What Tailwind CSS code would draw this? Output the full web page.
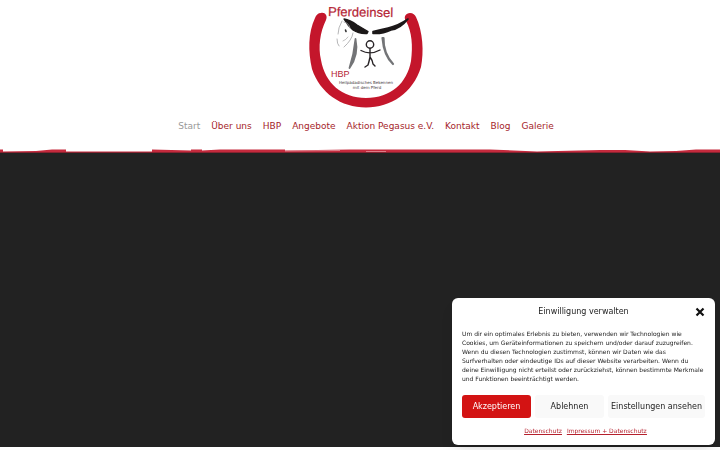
<!DOCTYPE html>
<html lang="de">
<head>
<meta charset="utf-8">
<meta name="viewport" content="width=device-width, initial-scale=1">
<title>Pferdeinsel</title>
<script src="https://cdn.jsdelivr.net/npm/@tailwindcss/browser@4"></script>
</head>
<body class="flex min-h-screen flex-col bg-white font-['DejaVu_Sans',sans-serif]">
<header>
  <div class="flex flex-col items-center pl-3">
    <a href="#" aria-label="Pferdeinsel Startseite" class="block">
      <svg width="132" height="112" viewBox="0 0 132 112" class="block" role="img" aria-label="Pferdeinsel Logo">
        <path d="M21 13C25 12 28 16 26 20C20 32 18 47 21 60C25 83 42 98 66 98C91 98 107 83 111 61C113 46 112 32 106 21C103 17 106 13 110 13C113 13 115 15 116 17C123 32 124 52 121 67C113 93 91 107.500 66 107.500C41 107.500 20 93 12 69C8 51 8 33 15 18C16 15 18 13 21 13Z" fill="#c4162b"/>
        <g fill="none" stroke-linecap="round" stroke-linejoin="round">
          <path d="M44 19Q50 20 57 25Q62 28 68 31.500L67 33.500Q59 34 53 30Q48 26 44 19Z" fill="#1c1819" stroke="#1c1819" stroke-width="1.400"/>
          <path d="M73 31.500Q80 30 88 28Q98 26 108 19Q100 29 91 30Q83 34 73 33.500Z" fill="#1c1819" stroke="#1c1819" stroke-width="1.600"/>
          <path d="M42 21Q38 28 38 34M37 39Q37 44 39 46M44 22Q49 23 50 28M53 33Q52 40 44 47" stroke="#a2a2a4" stroke-width=".8"/>
          <path d="M45.500 30L46 31.500" stroke="#333333" stroke-width="1.600"/>
          <path d="M48 37Q46 40 43 41" stroke="#999999" stroke-width=".6"/>
          <path d="M55.500 39Q59 55 49.500 68Q54 54 55.500 39Z" fill="#737477" stroke="#737477" stroke-width="1.800"/>
          <path d="M83.500 38Q83 53 93 64Q84 56 82.500 38Z" fill="#737477" stroke="#737477" stroke-width="2.200"/>
          <g stroke="#282326" stroke-width="1.400">
            <circle cx="70" cy="44.500" r="3.700"/>
            <path d="M70 48.500V57M61 50.500Q70 55.500 80 50M70 57Q69 62 68 65L65 67M70 57Q73 61 73 64L75 66"/>
          </g>
        </g>
        <g class="font-['Liberation_Sans',sans-serif]" fill="#b51f35">
          <text x="28" y="16" font-size="13" stroke="#b51f35" stroke-width=".2" transform="rotate(1 28 16)">Pferdeinsel</text>
          <text x="31" y="77" font-size="9">HBP</text>
        </g>
        <g class="font-['DejaVu_Sans',sans-serif]" fill="#3d373a" font-size="4" text-anchor="middle">
          <text x="66" y="84">Heilpädadisches Bekennen</text>
          <text x="67" y="89">mit dem Pferd</text>
        </g>
      </svg>
    </a>
    <nav aria-label="Hauptmenü" class="pt-2 pb-4">
      <ul class="flex flex-wrap justify-center gap-x-[11px] text-[9px] leading-[13px] text-[#a51e2a]">
        <li><a href="#" aria-current="page" class="text-[#999999]">Start</a></li>
        <li><a href="#">Über uns</a></li>
        <li><a href="#">HBP</a></li>
        <li><a href="#">Angebote</a></li>
        <li><a href="#">Aktion Pegasus e.V.</a></li>
        <li><a href="#">Kontakt</a></li>
        <li><a href="#">Blog</a></li>
        <li><a href="#">Galerie</a></li>
      </ul>
    </nav>
  </div>
  <svg viewBox="0 0 720 4" preserveAspectRatio="none" class="block h-1 w-full" aria-hidden="true">
    <path d="M0 .5H3V2.500L36 2L52 .5H66V2.500H152V.5L191 1.500V.5H202V1.500L220 .5H285V1.500L350 .5H490L537 2.500L600 1L625 1L650 2.500L676 2L696 .5H720V4H0Z" fill="#c52a3d"/>
    <path d="M285 2L340 1.500M366 2.500H386" stroke="#e6a0a9" stroke-width=".7"/>
    <path d="M0 3.500H720" stroke="#4a1b24" stroke-opacity=".5"/>
  </svg>
</header>
<main class="mb-[3px] flex-1 bg-[#222222]"></main>
<section role="dialog" aria-labelledby="consent-title" class="fixed right-[5px] bottom-[5px] w-[263px] rounded-md bg-white px-[10px] pt-2 pb-[10px] text-[#222222] shadow-lg">
  <div class="grid grid-cols-[10px_1fr_10px] items-center">
    <h2 id="consent-title" class="col-start-2 text-center text-[8px] leading-3">Einwilligung verwalten</h2>
    <button type="button" aria-label="Dialog schließen" class="flex justify-end">
      <svg width="10" height="10" viewBox="0 0 10 10" aria-hidden="true"><path d="M1.500 1.500L8.500 8.500M8.500 1.500L1.500 8.500" stroke="#111111" stroke-width="2.200"/></svg>
    </button>
  </div>
  <p class="mt-[11px] text-[6px] leading-[9px]">Um dir ein optimales Erlebnis zu bieten, verwenden wir Technologien wie Cookies, um Geräteinformationen zu speichern und/oder darauf zuzugreifen. Wenn du diesen Technologien zustimmst, können wir Daten wie das Surfverhalten oder eindeutige IDs auf dieser Website verarbeiten. Wenn du deine Einwilligung nicht erteilst oder zurückziehst, können bestimmte Merkmale und Funktionen beeinträchtigt werden.</p>
  <div class="mt-3 grid grid-cols-[69fr_69fr_97fr] gap-1 text-[8px]">
    <button type="button" class="h-[23px] rounded-[3px] bg-[#d31313] text-white">Akzeptieren</button>
    <button type="button" class="h-[23px] rounded-[3px] bg-[#f9f9f9]">Ablehnen</button>
    <button type="button" class="h-[23px] rounded-[3px] bg-[#f9f9f9] whitespace-nowrap">Einstellungen ansehen</button>
  </div>
  <div class="mt-2 flex justify-center gap-[5px] pl-1 text-[6px] leading-[9px] text-[#b51f2c] underline">
    <a href="#">Datenschutz</a>
    <a href="#">Impressum + Datenschutz</a>
  </div>
</section>
</body>
</html>
